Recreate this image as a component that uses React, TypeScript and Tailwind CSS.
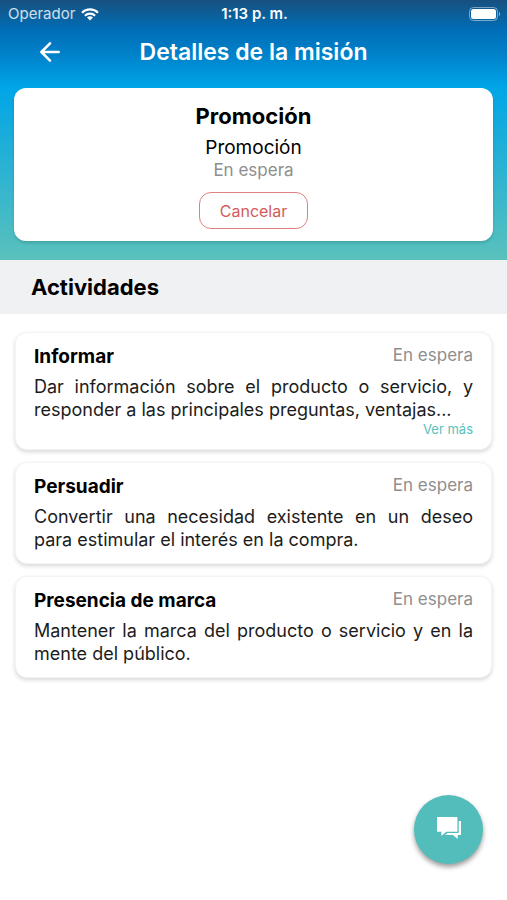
type Activity = {
  name: string;
  status: string;
  description: string;
  more?: boolean;
};

const activities: Activity[] = [
  {
    name: 'Informar',
    status: 'En espera',
    description:
      'Dar información sobre el producto o servicio, y responder a las principales preguntas, ventajas...',
    more: true,
  },
  {
    name: 'Persuadir',
    status: 'En espera',
    description:
      'Convertir una necesidad existente en un deseo para estimular el interés en la compra.',
  },
  {
    name: 'Presencia de marca',
    status: 'En espera',
    description: 'Mantener la marca del producto o servicio y en la mente del público.',
  },
];

function WifiIcon() {
  return (
    <svg width="18" height="13" viewBox="0 0 18 13" fill="none" stroke="white" strokeWidth="2.2">
      <path d="M1 4.7a11.3 11.3 0 0 1 16 0" />
      <path d="M3.9 7.7a7.2 7.2 0 0 1 10.2 0" />
      <path d="M9 12.6 6 9.6a4.3 4.3 0 0 1 6 0z" fill="white" stroke="none" />
    </svg>
  );
}

function BatteryIcon() {
  return (
    <svg width="32" height="15" viewBox="0 0 32 15" fill="none">
      <rect x="0.5" y="0.5" width="28" height="13" rx="4" stroke="white" strokeOpacity="0.45" />
      <rect x="2" y="2" width="25" height="10" rx="2.5" fill="white" />
      <path d="M30 4.8v4.4c1.6-.8 1.6-3.6 0-4.4z" fill="white" fillOpacity="0.5" />
    </svg>
  );
}

function StatusBar() {
  return (
    <div className="grid h-7 grid-cols-[1fr_auto_1fr] items-center pr-1.5 pl-2 text-[15px] leading-5 text-white">
      <div className="flex items-center gap-1.5 text-white/80">
        <span>Operador</span>
        <WifiIcon />
      </div>
      <span className="text-center font-semibold">1:13 p. m.</span>
      <div className="flex justify-end">
        <BatteryIcon />
      </div>
    </div>
  );
}

function ActivityCard({ activity }: { activity: Activity }) {
  return (
    <li className="rounded-xl border border-gray-100 bg-white px-[18px] pt-3 pb-3 shadow-[0_2px_4px_rgba(0,0,0,0.16)]">
      <div className="flex items-start justify-between">
        <h3 className="text-[19px] leading-6 font-bold">{activity.name}</h3>
        <span className="text-[17px] leading-5 text-[#8e8e8e]">{activity.status}</span>
      </div>
      <p className="mt-1.5 text-justify text-lg leading-[23px] text-[#1c1c1c]">
        {activity.description}
      </p>
      {activity.more && (
        <div className="flex justify-end">
          <a href="#" className="text-[13px] leading-4 text-[#58bfbc]">
            Ver más
          </a>
        </div>
      )}
    </li>
  );
}

export default function App() {
  return (
    <div className="min-h-screen bg-white font-['Inter',sans-serif] text-black">
      <header className="bg-[linear-gradient(to_bottom,#18507f_0px,#006eb7_30px,#0083cb_56px,#00a5e7_86px,#5ac1bc_260px)] pb-[19px]">
        <StatusBar />
        <div className="grid h-[60px] grid-cols-[1fr_auto_1fr] items-center pb-3 text-white">
          <button type="button" aria-label="Volver" className="ml-10 w-5">
            <svg
              width="20"
              height="20"
              viewBox="0 0 20 20"
              fill="none"
              stroke="white"
              strokeWidth="2.5"
              strokeLinecap="round"
              strokeLinejoin="round"
            >
              <path d="M18.700 10H1.600M10 1.400 1.400 10l8.600 8.600" />
            </svg>
          </button>
          <h1 className="text-[23px] leading-7 font-semibold">Detalles de la misión</h1>
          <span />
        </div>
        <section className="mx-[14px] flex flex-col items-center rounded-xl bg-white px-4 pt-[14px] pb-3 shadow-[0_2px_3px_rgba(0,0,0,0.15)]">
          <h2 className="text-[22px] leading-7 font-bold">Promoción</h2>
          <p className="mt-1.5 text-[19px] leading-6">Promoción</p>
          <p className="text-[17px] leading-5 text-[#8e8e8e]">En espera</p>
          <button
            type="button"
            className="mt-3 h-[37px] rounded-xl border border-[#e08080] px-5 text-base text-[#d25c5c]"
          >
            Cancelar
          </button>
        </section>
      </header>

      <h2 className="bg-[#f0f1f3] px-[31px] py-[13px] text-[22px] leading-7 font-bold">
        Actividades
      </h2>

      <ul className="flex flex-col gap-3 px-[15px] py-[18px]">
        {activities.map((activity) => (
          <ActivityCard key={activity.name} activity={activity} />
        ))}
      </ul>

      <button
        type="button"
        aria-label="Mensajes"
        className="fixed right-6 bottom-9 flex size-[69px] items-center justify-center rounded-full bg-[#52bdba] pb-1 shadow-[0_3px_5px_rgba(0,0,0,0.4)]"
      >
        <svg width="24" height="22" viewBox="0 0 24 22" fill="white">
          <path d="M.6 0h19.2q.6 0 .6.6v13.6q0 .6-.6.6H9.200L4.400 19v-4.200H.6q-.6 0-.6-.6V.6Q0 0 .6 0z" />
          <path d="M21.700 4H24v13.400q0 .6-.6.6H20.700v4L16 18H8.200l2.200-1.900H21.700z" />
        </svg>
      </button>
    </div>
  );
}
